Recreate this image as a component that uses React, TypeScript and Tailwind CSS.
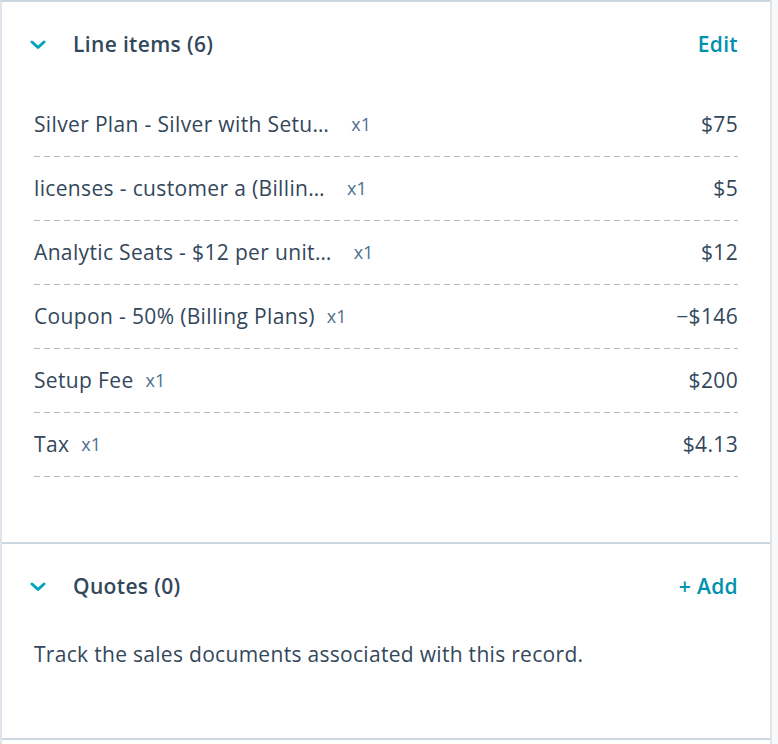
import React from "react";

const items = [
  { name: "Silver Plan - Silver with Setu…", qty: "x1", price: "$75", trunc: true },
  { name: "licenses - customer a (Billin…", qty: "x1", price: "$5", trunc: true },
  { name: "Analytic Seats - $12 per unit…", qty: "x1", price: "$12", trunc: true },
  { name: "Coupon - 50% (Billing Plans)", qty: "x1", price: "−$146", trunc: false },
  { name: "Setup Fee", qty: "x1", price: "$200", trunc: false },
  { name: "Tax", qty: "x1", price: "$4.13", trunc: false },
];

function Chevron() {
  return (
    <svg width="16" height="10" viewBox="0 0 16 10" className="shrink-0">
      <polyline points="2,2 8,7.5 14,2" fill="none" stroke="#00a4bd" strokeWidth="3" strokeLinecap="round" strokeLinejoin="round" />
    </svg>
  );
}

function Dashed() {
  return <div className="h-px w-full bg-[linear-gradient(to_right,#b8b8b8_6px,transparent_6px)] bg-[length:10px_1px]" />;
}

export default function App() {
  return (
    <div className="flex w-[778px] h-[744px] bg-white overflow-hidden text-[#33475b] tracking-[0.35px]" style={{ fontFamily: "'Open Sans', 'Noto Sans', sans-serif" }}>
      <div className="w-[770px] shrink-0 border-l-2 border-t-2 border-l-[#dfe3eb] border-t-[#cbd6e2] flex flex-col">
        {/* Line items section */}
        <div className="h-[540px] px-[32px]">
          <div className="h-[86px] flex items-center">
            <div className="w-[16px] ml-[-4px] flex items-center"><Chevron /></div>
            <div className="ml-[27px] text-[21px] font-semibold">Line items (6)</div>
            <div className="ml-auto text-[21px] font-semibold text-[#0091ae]">Edit</div>
          </div>
          <div className="mt-[5px]">
            {items.map((it) => (
              <div key={it.name}>
                <div className="h-[63px] flex items-center">
                  <span className="text-[21px]">{it.name}</span>
                  <span className={(it.trunc ? "ml-[22px]" : "ml-[12px]") + " text-[18px] text-[#516f90] tracking-normal"}>{it.qty}</span>
                  <span className="ml-auto text-[21px]">{it.price}</span>
                </div>
                <Dashed />
              </div>
            ))}
          </div>
        </div>
        <div className="h-[2px] bg-[#cbd6e2]" />
        {/* Quotes section */}
        <div className="h-[194px] px-[32px]">
          <div className="h-[86px] flex items-center">
            <div className="w-[16px] ml-[-4px] flex items-center"><Chevron /></div>
            <div className="ml-[27px] text-[21px] font-semibold">Quotes (0)</div>
            <div className="ml-auto text-[21px] font-semibold text-[#0091ae]">+ Add</div>
          </div>
          <div className="h-[50px] flex items-center text-[21px] tracking-[0.3px]">Track the sales documents associated with this record.</div>
        </div>
        <div className="h-[2px] bg-[#cbd6e2]" />
      </div>
      <div className="w-[2px] bg-[#e3e3e3]" />
      <div className="flex-1 bg-[#f7f8f9]" />
    </div>
  );
}
